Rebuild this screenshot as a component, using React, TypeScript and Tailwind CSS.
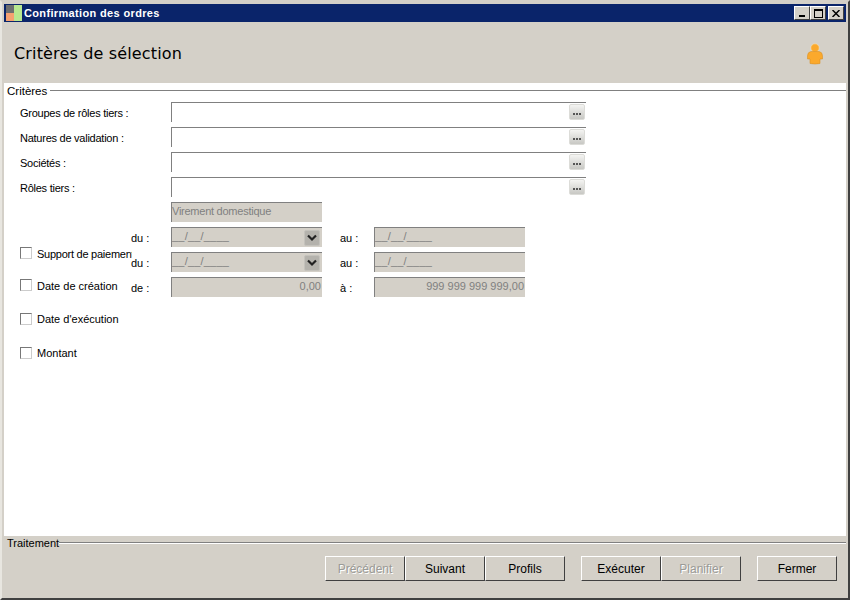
const ui = "[font-family:'Liberation_Sans',Arial,sans-serif]";

function Ellipsis() {
  return (
    <button className="mt-[1px] mr-[1px] ml-auto flex h-[16px] w-[16px] items-end justify-center rounded-[2px] border border-[#dcdcd8] bg-gradient-to-b from-[#f4f4f2] to-[#c8c8c4] pb-[4px]">
      <span className="flex gap-[1px]">
        <i className="h-[2px] w-[2px] bg-[#555]" />
        <i className="h-[2px] w-[2px] bg-[#555]" />
        <i className="h-[2px] w-[2px] bg-[#555]" />
      </span>
    </button>
  );
}

function LookupRow({ label }: { label: string }) {
  return (
    <div className="flex h-[25px]">
      <div className="w-[151px] pt-[4px] text-[11px] leading-[14px] tracking-[-0.25px]">{label}</div>
      <div className="flex h-[20px] w-[415px] border-t border-l border-[#808080]">
        <Ellipsis />
      </div>
    </div>
  );
}

function Disabled({ text, right, arrow }: { text: string; right?: boolean; arrow?: boolean }) {
  const spacing = right ? "tracking-normal" : text.startsWith("_") ? "tracking-[0.2px]" : "tracking-[-0.25px]";
  return (
    <div
      className={`flex h-[20px] w-[151px] items-center border-t border-l border-[#808080] bg-[#d4d0c8] pr-[1px] text-[11px] text-[#808080] ${right ? "justify-end" : "justify-between"}`}
    >
      <span className={`pb-[2px] ${spacing}`}>{text}</span>
      {arrow && (
        <span className="mr-[1px] flex h-[16px] w-[16px] items-center justify-center rounded-[2px] border border-[#c4c2bc] bg-[#b4b2ac]">
          <svg width="10" height="8" viewBox="0 0 10 8">
            <path d="M1 1.5 L5 5.5 L9 1.5" fill="none" stroke="#222" strokeWidth="2.2" />
          </svg>
        </span>
      )}
    </div>
  );
}

function RangeRow({ from, fromValue, to, toValue, arrow, right }: { from: string; fromValue: string; to: string; toValue: string; arrow?: boolean; right?: boolean }) {
  return (
    <div className="flex h-[20px]">
      <div className="w-[40px] pt-[4px] text-[11px] leading-[14px]">{from}</div>
      <Disabled text={fromValue} arrow={arrow} right={right} />
      <div className="w-[52px] pt-[4px] pl-[18px] text-[11px] leading-[14px]">{to}</div>
      <Disabled text={toValue} right={right} />
    </div>
  );
}

function Check({ label, className, labelClass = "" }: { label: string; className: string; labelClass?: string }) {
  return (
    <div className={`flex h-[14px] items-center ${className}`}>
      <span className="h-[12px] w-[12px] shrink-0 border border-t-[#777] border-r-[#ccc] border-b-[#ccc] border-l-[#777] bg-white" />
      <span className={`ml-[5px] text-[11px] leading-[14px] whitespace-nowrap ${labelClass}`}>{label}</span>
    </div>
  );
}

function WinBtn({ children }: { children: React.ReactNode }) {
  return (
    <div className="flex h-[14px] w-[16px] items-center justify-center border border-t-white border-r-[#404040] border-b-[#404040] border-l-white bg-[#d4d0c8]">
      {children}
    </div>
  );
}

function Btn({ label, disabled, className = "" }: { label: string; disabled?: boolean; className?: string }) {
  return (
    <button
      className={`h-[25px] w-[80px] border border-t-white border-r-[#404040] border-b-[#404040] border-l-white bg-[#d4d0c8] text-[12px] ${disabled ? "text-[#9a9a96] [text-shadow:1px_1px_0_#fff]" : "text-black"} ${className}`}
    >
      {label}
    </button>
  );
}

export default function App() {
  return (
    <div className={`${ui} flex h-[600px] w-[850px] flex-col border-[2px] border-t-[#d4d0c8] border-r-[#404040] border-b-[#404040] border-l-[#e8e6e0] bg-[#d4d0c8] p-[2px] pb-[1px] text-black`}>
      <div className="flex h-[18px] shrink-0 items-center bg-[#0a246a] pr-[2px] pl-[2px]">
        <div className="mr-[2px] flex h-[16px] w-[16px] shrink-0">
          <div className="flex w-[8px] flex-col">
            <div className="h-[8px] bg-[#6e6e6e]" />
            <div className="h-[8px] bg-[#f5a070]" />
          </div>
          <div className="w-[8px] bg-[#b8e890]" />
        </div>
        <span className="text-[11px] font-bold tracking-[0.35px] text-white">Confirmation des ordres</span>
        <div className="ml-auto flex">
          <WinBtn>
            <i className="mt-[6px] h-[2px] w-[6px] bg-black" />
          </WinBtn>
          <WinBtn>
            <i className="h-[9px] w-[9px] border border-t-[2px] border-black" />
          </WinBtn>
          <div className="ml-[2px]">
            <WinBtn>
              <svg width="8" height="7" viewBox="0 0 8 7">
                <path d="M0.5 0 L7.5 7 M7.5 0 L0.5 7" stroke="#000" strokeWidth="1.5" />
              </svg>
            </WinBtn>
          </div>
        </div>
      </div>

      <div className="flex h-[61px] shrink-0 items-center justify-between pt-[3px] pr-[22px] pl-[10px]">
        <h1 className="font-['DejaVu_Sans'] text-[16px] font-normal tracking-[0.15px]">Critères de sélection</h1>
        <svg width="18" height="22" viewBox="0 0 18 22">
          <circle cx="9" cy="5" r="4.2" fill="#fba92c" stroke="#f6e2b8" strokeWidth="0.6" />
          <path d="M5 8.5 H13 Q16.5 9 16.5 13 V16 H14 V20.5 Q9 21.5 4 20.5 V16 H1.5 V13 Q1.5 9 5 8.5 Z" fill="#fba92c" stroke="#d8922a" strokeWidth="0.6" />
        </svg>
      </div>

      <div className="flex min-h-0 flex-1 flex-col bg-white">
        <div className="flex h-[15px] items-center pl-[3px]">
          <span className="text-[11.5px] leading-[14px]">Critères</span>
          <span className="mt-[-1px] ml-[3px] h-[1px] flex-1 bg-[#808080]" />
        </div>
        <div className="pt-[4px] pl-[16px]">
          <LookupRow label="Groupes de rôles tiers :" />
          <LookupRow label="Natures de validation :" />
          <LookupRow label="Sociétés :" />
          <LookupRow label="Rôles tiers :" />
          <div className="flex">
            <div className="w-[112px] overflow-hidden">
              <Check label="Support de paiement" className="mt-[44px]" labelClass="pt-[2px] tracking-[-0.25px]" />
              <Check label="Date de création" className="mt-[18px]" labelClass="pt-[2px]" />
              <Check label="Date d'exécution" className="mt-[20px]" />
              <Check label="Montant" className="mt-[20px]" />
            </div>
            <div className="ml-[-1px] flex flex-col">
              <div className="ml-[40px]">
                <Disabled text="Virement domestique" />
              </div>
              <div className="mt-[5px] flex flex-col gap-[5px]">
                <RangeRow from="du :" fromValue="__/__/____" to="au :" toValue="__/__/____" arrow />
                <RangeRow from="du :" fromValue="__/__/____" to="au :" toValue="__/__/____" arrow />
                <RangeRow from="de :" fromValue="0,00" to="à :" toValue="999 999 999 999,00" right />
              </div>
            </div>
          </div>
        </div>
      </div>

      <div className="flex h-[61px] shrink-0 flex-col">
        <div className="flex h-[14px] items-center pl-[3px]">
          <span className="text-[11px] leading-[14px]">Traitement</span>
          <span className="mt-[-1px] h-[2px] flex-1 border-t border-b border-t-[#808080] border-b-white" />
        </div>
        <div className="mt-[6px] flex pl-[321px]">
          <Btn label="Précédent" disabled />
          <Btn label="Suivant" />
          <Btn label="Profils" />
          <Btn label="Exécuter" className="ml-[16px]" />
          <Btn label="Planifier" disabled />
          <Btn label="Fermer" className="ml-[16px]" />
        </div>
      </div>
    </div>
  );
}
